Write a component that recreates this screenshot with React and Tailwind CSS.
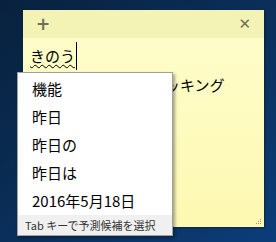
export default function App() {
  const font = { fontFamily: '"Noto Sans CJK JP", "Noto Sans", sans-serif' };
  const items = ["機能", "昨日", "昨日の", "昨日は", "2016年5月18日"];
  return (
    <div
      className="relative w-[276px] h-[242px] overflow-hidden bg-gradient-to-br from-[#08213d] via-[#0a2f5a] to-[#0b3d78] pt-[10px] pl-[23px]"
      style={font}
    >
      <div className="w-[241px] h-[217px] flex flex-col bg-gradient-to-b from-[#fefecc] to-[#fdf8b2] shadow-[1px_1px_2px_rgba(0,0,0,0.35)]">
        <div className="h-[28px] flex items-center justify-between px-[13px] bg-[#f4f3b6] text-[#6f6f58] shrink-0">
          <span className="text-[17px] font-bold leading-none" style={{ fontFamily: '"DejaVu Sans", sans-serif' }}>+</span>
          <span className="text-[15px] leading-none" style={{ fontFamily: '"DejaVu Sans", sans-serif' }}>✕</span>
        </div>
        <div className="relative flex-1 pt-[3px] pl-[7px] text-[15px] leading-[29px] text-black">
          <div className="flex items-center">
            <span className="underline decoration-wavy decoration-1 underline-offset-[2px] decoration-black">きのう</span>
            <span className="inline-block w-px h-[28px] bg-black ml-px" />
          </div>
          <div className="whitespace-nowrap">昨日は高尾山でトレッキング</div>
          <div className="absolute right-[3px] bottom-[3px] grid grid-cols-3 gap-[1px]">
            <span className="w-px h-px" />
            <span className="w-px h-px" />
            <span className="w-px h-px bg-[#a09a70]" />
            <span className="w-px h-px" />
            <span className="w-px h-px bg-[#a09a70]" />
            <span className="w-px h-px bg-[#a09a70]" />
            <span className="w-px h-px bg-[#a09a70]" />
            <span className="w-px h-px bg-[#a09a70]" />
            <span className="w-px h-px bg-[#a09a70]" />
          </div>
        </div>
      </div>
      <div className="absolute left-[17px] top-[72px] w-[156px] border border-[#a0a0a0] bg-white shadow-[2px_2px_3px_rgba(0,0,0,0.35)]">
        <div className="pt-[2px]">
          {items.map((t) => (
            <div key={t} className="h-[28px] flex items-center pl-[14px] text-[15px] text-black">
              {t}
            </div>
          ))}
        </div>
        <div className="h-[20px] flex items-center pl-[7px] bg-[#f0f0f0] text-[11px] text-[#333]">
          Tab キーで予測候補を選択
        </div>
      </div>
    </div>
  );
}
